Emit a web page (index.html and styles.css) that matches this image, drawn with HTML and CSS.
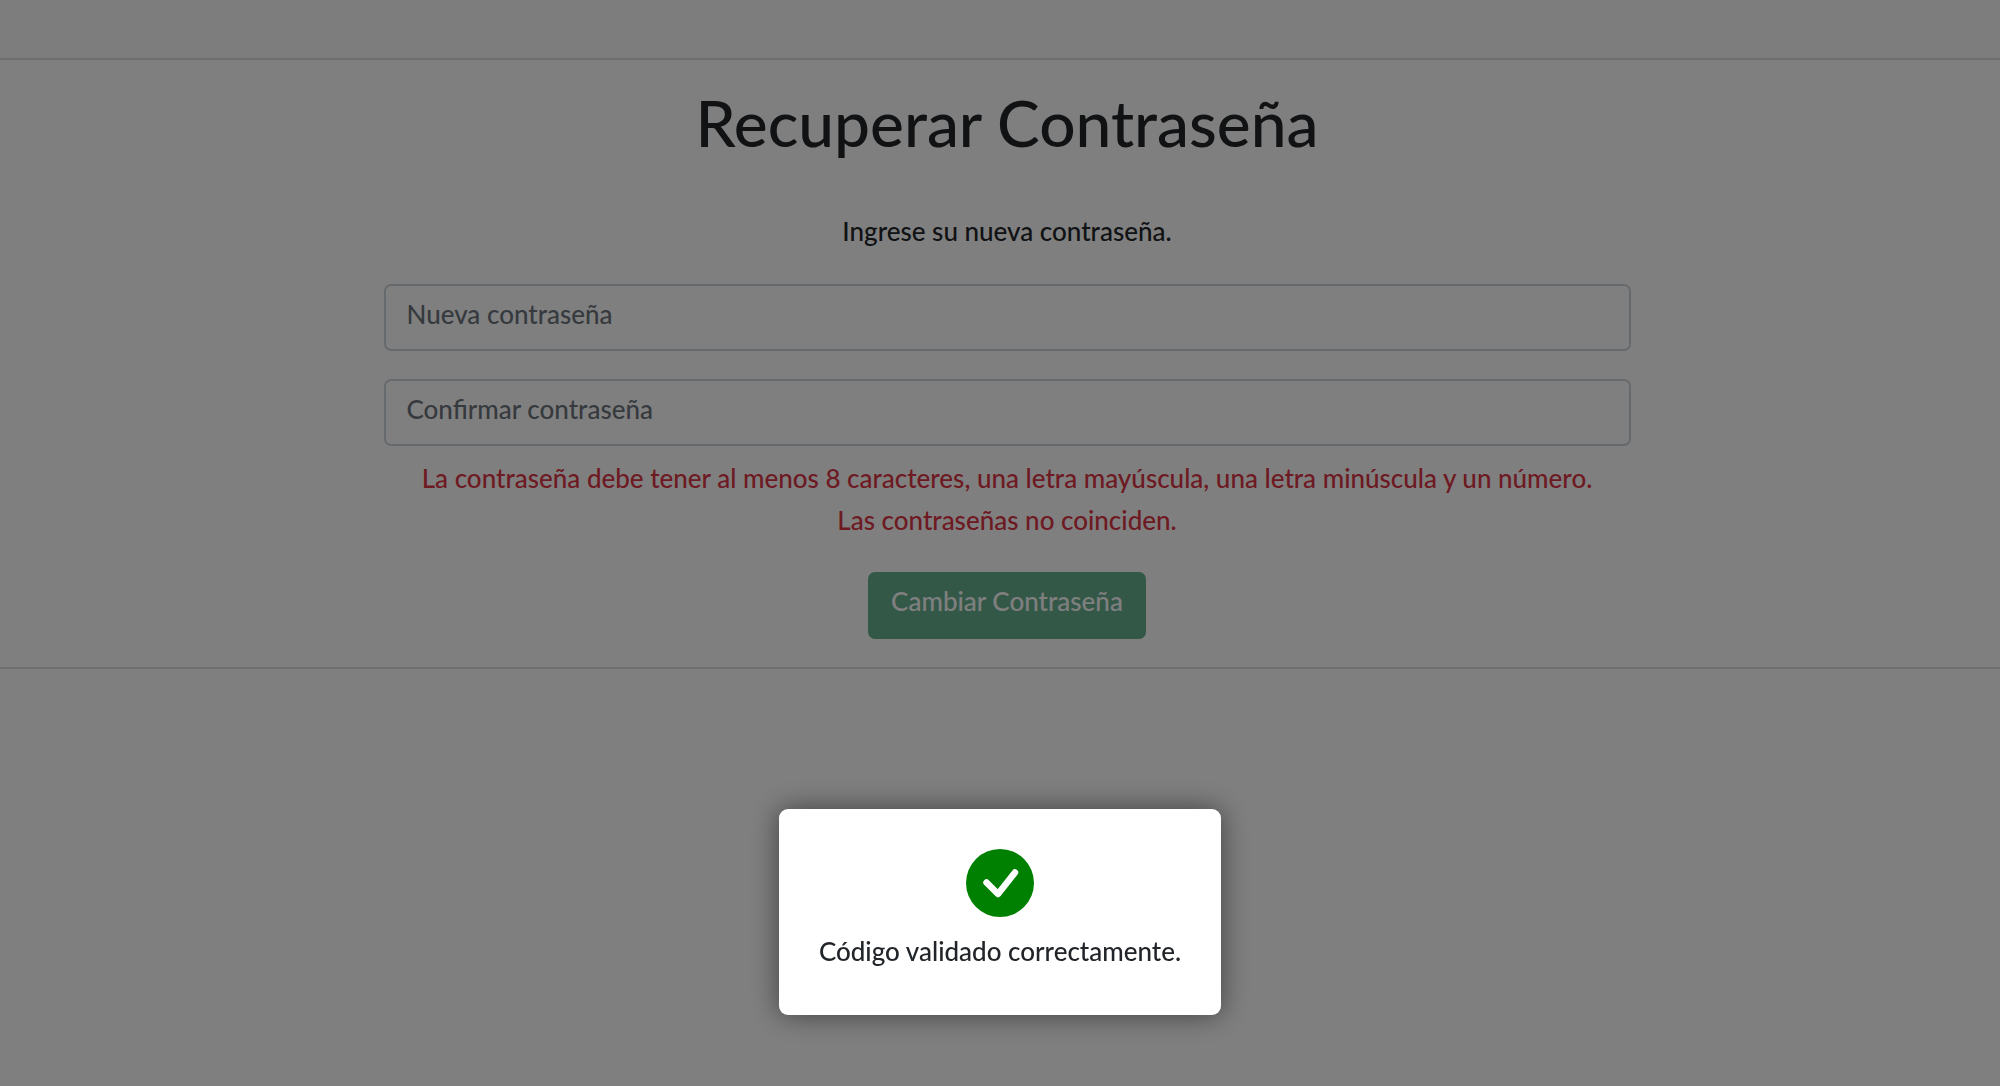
FILE: index.html
```html
<!doctype html>
<html lang="es">
<head>
  <meta charset="utf-8">
  <meta content="width=device-width, initial-scale=1" name="viewport">
  <title>Recuperar Contraseña</title>
  <link rel="stylesheet" href="styles.css">
</head>
<body>
  <header class="topbar"></header>

  <main class="recover">
    <h1>Recuperar Contraseña</h1>
    <form class="recover_form">
      <p class="intro">Ingrese su nueva contraseña.</p>
      <input type="password" class="field" placeholder="Nueva contraseña" aria-label="Nueva contraseña">
      <input type="password" class="field" placeholder="Confirmar contraseña" aria-label="Confirmar contraseña">
      <div class="errors">
        <p>La contraseña debe tener al menos 8 caracteres, una letra mayúscula, una letra minúscula y un número.</p>
        <p>Las contraseñas no coinciden.</p>
      </div>
      <button type="submit" class="btn" disabled>Cambiar Contraseña</button>
    </form>
  </main>

  <div class="overlay">
    <div class="modal" role="dialog" aria-modal="true" aria-labelledby="modal_text">
      <svg class="check" viewBox="0 0 68 68" aria-hidden="true">
        <circle cx="34" cy="34" r="34" fill="#008000"/>
        <path d="M20.5 33.5L32 45L49 23.5" fill="none" stroke="#fff" stroke-width="6.5" stroke-linecap="round" stroke-linejoin="round"/>
      </svg>
      <p id="modal_text">Código validado correctamente.</p>
    </div>
  </div>
</body>
</html>
```

FILE: styles.css
```css
* {
  margin: 0; padding: 0;
  box-sizing: border-box;
}
body {
  min-height: 100vh;
  background: #fff;
  color: #212529;
  font-family: Lato, 'Open Sans', sans-serif;
  font-size: 26px;
  font-weight: 500;
  line-height: 42px;
}
.topbar {
  height: 60px;
  background: #fbfbfb;
  border-bottom: 2px solid #dedede;
}
.recover {
  padding: 28px 14px 28px 28px;
  border-bottom: 2px solid #dedede;
  text-align: center;
}
.recover h1 {
  font-size: 64px;
  font-weight: 500;
  line-height: 70px;
}
.recover_form {
  max-width: 1247px;
  margin: 52px auto 0;
}
.intro {
  margin-bottom: 32px;
}
.field {
  display: block;
  width: 100%;
  height: 67px;
  margin-bottom: 28px;
  padding: 9px 21px 17px;
  border: 2px solid #ced4da;
  border-radius: 7px;
  background: #fff;
  font: inherit;
}
.field::placeholder {
  color: #6c757d;
  opacity: 1;
}
.errors {
  margin: -17px 0 31px;
  color: #dc3545;
}
.btn {
  height: 67px;
  padding: 9px 23px 17px;
  border: 0;
  border-radius: 7px;
  background: #198754;
  color: #fff;
  font: inherit;
  line-height: 41px;
  opacity: 0.65;
  vertical-align: top;
}

/* Confirmation dialog */
.overlay {
  position: fixed;
  top: 0; right: 0; bottom: 0; left: 0;
  display: flex;
  align-items: flex-end;
  justify-content: center;
  padding-bottom: 71px;
  background: rgba(0,0,0,0.5);
}
.modal {
  padding: 40px 40px 43px;
  border-radius: 9px;
  background: #fff;
  box-shadow: 0 0 28px rgba(0,0,0,0.5);
  text-align: center;
}
.check {
  display: block;
  width: 68px;
  height: 68px;
  margin: 0 auto 13px;
}
```
